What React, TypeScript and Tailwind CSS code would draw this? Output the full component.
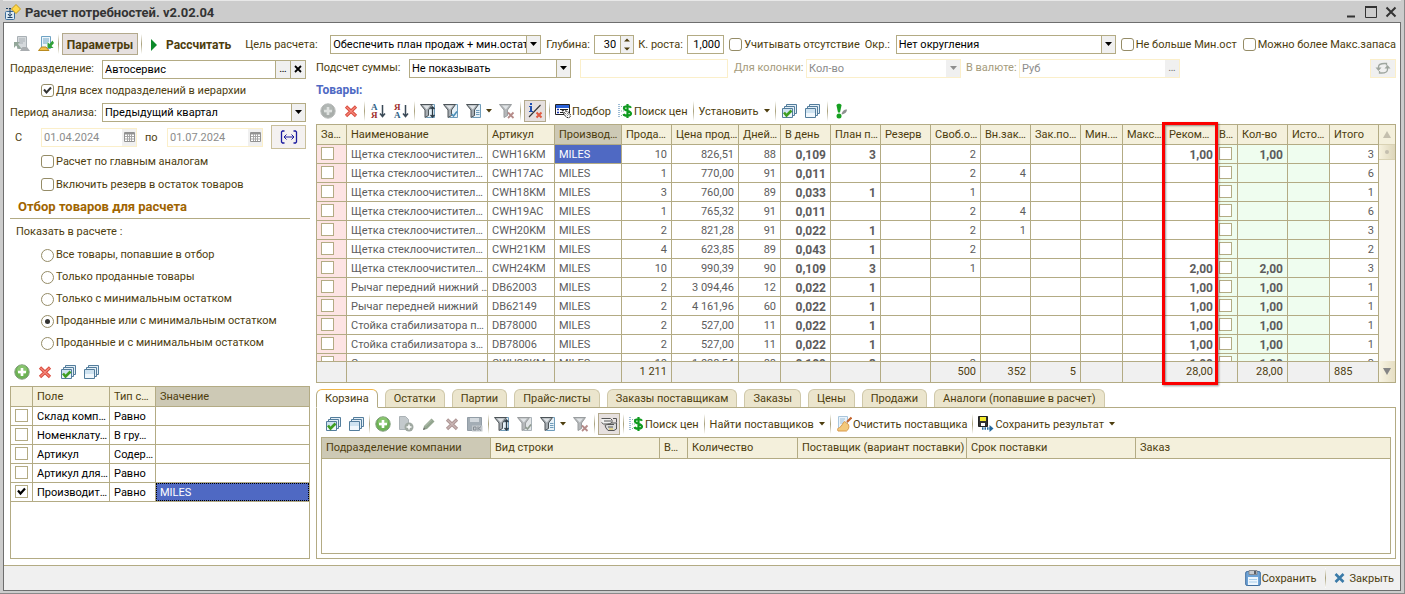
import type { ReactNode } from 'react';
import clsx from 'clsx';

/* ---------- icons ---------- */

function Icon({ children, w = 16 }: { children: ReactNode; w?: number }) {
  return (
    <svg width={w} height={16} viewBox={`0 0 ${w} 16`} className="shrink-0" aria-hidden="true">
      {children}
    </svg>
  );
}

const AppIcon = () => (
  <Icon>
    <rect x="0.5" y="7.500" width="9" height="8" rx="1" fill="#dbeaf5" stroke="#3c6e9c" />
    <path d="M5 5v7M3 10l2 2.500L7 10M2.500 13.500h5" stroke="#1c3f63" fill="none" />
    <path d="M1 4.500h6" stroke="#1c3f63" strokeDasharray="2 1" />
    <path d="M11 .5l4.500 4.500L11 9.500 6.500 5z" fill="#ffd84a" stroke="#c79a17" />
  </Icon>
);

const DocArrowIcon = ({ muted }: { muted?: boolean }) => (
  <Icon>
    <path d="M3.500.5h9v12h-9z" fill={muted ? '#d5d9dc' : '#eef6fb'} stroke={muted ? '#a9b0b5' : '#6fa3c4'} />
    <path d="M5 3h6M5 5h6M5 7h4" stroke={muted ? '#a9b0b5' : '#6fa3c4'} />
    {muted ? (
      <>
        <path d="M0 6h6L4 8l3 4-2 1-3-3.500L0 12z" fill="#93a79a" />
        <path d="M6 15l2.500-4h4.500l3 4z" fill="#a9adb0" />
      </>
    ) : (
      <>
        <path d="M.5 14.500l3-3.500h4.500l3 3.500z" fill="#f2c14b" stroke="#b98a1f" />
        <path d="M14.500 4.500L11.500 8 9.500 6v6h6l-2-2L16 7z" fill="#2fa038" />
      </>
    )}
  </Icon>
);

const PlusIcon = ({ muted }: { muted?: boolean }) => (
  <Icon>
    <circle cx="8" cy="8" r="7.200" fill={muted ? '#a9aeab' : '#6db254'} stroke={muted ? '#b9bcba' : '#7f9c7a'} />
    <circle cx="8" cy="6" r="5" fill={muted ? '#b8bcba' : '#9ad07f'} opacity="0.6" />
    <path d="M8 4v8M4 8h8" stroke={muted ? '#dfe2e0' : '#fff'} strokeWidth="2.600" />
  </Icon>
);

const CrossIcon = ({ muted }: { muted?: boolean }) => (
  <Icon>
    <path d="M3 3.500l10 9.500M13 3.500L3 13" stroke={muted ? '#ad9594' : '#d94a3c'} strokeWidth="3.200" />
    <path d="M3.500 4l9 8.500M12.500 4l-9 8.500" stroke={muted ? '#c9b5b4' : '#f58a7c'} strokeWidth="1.200" />
  </Icon>
);

const SheetsIcon = ({ checked }: { checked?: boolean }) => (
  <Icon>
    <path d="M5.500 1.500h10v9h-10z" fill="#e3eef6" stroke="#537d9c" />
    <path d="M3.500 3.500h10v9h-10z" fill="#e3eef6" stroke="#537d9c" />
    <path d="M1.500 5.500h10v9h-10z" fill="#f0f7fc" stroke="#537d9c" />
    <path d="M2 6h9v4H2z" fill="#cfe3f1" />
    {checked && <path d="M3 9.500l2.500 3L10.500 7.500" stroke="#3f9e22" strokeWidth="2.600" fill="none" />}
  </Icon>
);

const SortIcon = ({ up }: { up?: boolean }) => (
  <Icon>
    <text x="1" y="7" fontSize="9" fontWeight="700" fontFamily="Liberation Serif, serif" fill={up ? '#a02c2c' : '#2d5f86'}>
      {up ? 'Я' : 'А'}
    </text>
    <text x="1" y="15" fontSize="9" fontWeight="700" fontFamily="Liberation Serif, serif" fill={up ? '#2d5f86' : '#a02c2c'}>
      {up ? 'А' : 'Я'}
    </text>
    <path d="M12.500 2v11M10 10.500l2.500 3 2.500-3" stroke="#3b4a57" strokeWidth="1.500" fill="none" />
  </Icon>
);

type FilterKind = 'sort' | 'check' | 'list' | 'off';

const FilterIcon = ({ kind, muted }: { kind: FilterKind; muted?: boolean }) => (
  <Icon>
    {kind !== 'off' && <path d="M6.500 1.500h8v13h-8z" fill={muted ? '#e2e5e7' : '#e6f1f8'} stroke={muted ? '#aab3b9' : '#6f9cba'} />}
    <path d="M.5 1.500h12L8.500 7v5.500L5 14.500V7z" fill={muted || kind === 'off' ? '#b4b7b9' : '#a7adb2'} stroke={muted || kind === 'off' ? '#999d9f' : '#4c5357'} />
    <path d="M3 2.500h7L6.800 6.500z" fill="#dfe3e6" />
    {kind === 'sort' && <path d="M12.500 4v10M10.500 6l2-2 2 2M10.500 12l2 2 2-2" stroke="#2b3a45" strokeWidth="1.300" fill="none" />}
    {kind === 'check' && <path d="M8.500 11l2 2 3.500-4.500" stroke={muted ? '#8f9a8f' : '#4c8fb8'} strokeWidth="1.600" fill="none" />}
    {kind === 'list' && <path d="M10 7.500h3.500M10 9.500h3.500M10 11.500h3.500" stroke="#6f9cba" />}
    {kind === 'off' && <path d="M9 9.500l5.500 5.500M14.500 9.500L9 15" stroke="#b58b89" strokeWidth="1.800" />}
  </Icon>
);

const InfoIcon = () => (
  <Icon>
    <path d="M3 0h2v2H3zM2 3h3v5h1v1H2V8h1V4H2z" fill="#1f4fb0" />
    <path d="M13.500 2L2 14" stroke="#333" strokeWidth="1.100" />
    <path d="M9.500 9.500l5 5M14.500 9.500l-5 5" stroke="#e05a40" strokeWidth="2" />
  </Icon>
);

const PickIcon = () => (
  <Icon>
    <path d="M.5 1.500h14v10H.5z" fill="#fff" stroke="#222" />
    <path d="M1 2h13v3H1z" fill="#2a61d8" />
    <path d="M2 6.500h2M2 9.500h2" stroke="#1733b5" strokeWidth="1.500" />
    <path d="M5 6.500h8M5 9.500h4" stroke="#222" />
    <path d="M7 7l6 1.500 3 4-2 2.500-3-1-2-3z" fill="#fff" stroke="#222" strokeDasharray="2 1" />
    <path d="M9 9l4 4M11 8.500l3.500 4" stroke="#222" strokeDasharray="1 1" />
  </Icon>
);

const DollarIcon = () => (
  <Icon w={15}>
    <path d="M1 1v14" stroke="#3b77a8" strokeDasharray="1 1" />
    <path d="M3 3.500h3M3 8h3M3 12.500h3" stroke="#8aa" strokeDasharray="1 1" />
    <path d="M13 4.800C12 2.800 6 2.500 6 5.200S13 7.800 13 10.500 6.500 13.500 5.500 11M9.500 1v14" stroke="#0f9a1e" strokeWidth="2.200" fill="none" />
  </Icon>
);

const ExclaimIcon = () => (
  <Icon>
    <path d="M6.500 11c1-4 4-5 5.500-4.500 0 2.500-2 4.500-5 5z" fill="#8d9190" />
    <path d="M1.500 2.500c0-2.500 5-2.500 5 0L5 9.500H3z" fill="#16a021" />
    <circle cx="4" cy="13" r="2.500" fill="#16a021" />
  </Icon>
);

const DocPlusIcon = () => (
  <Icon>
    <path d="M1.500.5h6l3 3v10h-9z" fill="#c3c9cc" stroke="#abb2b6" />
    <circle cx="11" cy="11" r="4.500" fill="#9fa8a1" />
    <path d="M11 8.500v5M8.500 11h5" stroke="#fff" strokeWidth="1.500" />
  </Icon>
);

const PencilIcon = () => (
  <Icon>
    <path d="M2 14l1-4 7.500-7.500 3 3L6 13z" fill="#93a58f" />
    <path d="M4 10.500L11 3.500" stroke="#b5c2b1" />
    <path d="M2 14l1-2.500L4.500 13z" fill="#6b6b6b" />
  </Icon>
);

const SaveOkIcon = () => (
  <Icon>
    <path d="M.5 1.500h14v13h-14z" fill="#a3adb5" stroke="#929da6" />
    <path d="M3 2h9v4H3z" fill="#d3d9de" />
    <path d="M5 9.500h10.500v6H5z" fill="#c3c8cc" />
    <path d="M6.500 11h2.500v3H6.500zM11 10.500v4M14 10.500l-2.500 2 2.500 2" stroke="#858d94" fill="none" />
  </Icon>
);

const LinkIcon = () => (
  <Icon w={18}>
    <path d="M1.500 2.500h9l1.500 1.500v2.500L10 8H3.500L1.500 6.500M4 5h7" fill="#f0f0f0" stroke="#555" />
    <path d="M5 9.500c2-1.500 4-1 6-2.500h5.500v6L14 14.500H8L6 12z" fill="#dadada" stroke="#555" />
    <path d="M8 11h5M13 2.500h3.500v4M8 8.500h6" stroke="#555" fill="none" />
    <path d="M9 13h4" stroke="#e3c83d" />
  </Icon>
);

const BrushIcon = () => (
  <Icon>
    <path d="M2.500.5h9v13h-9z" fill="#eaf3fb" stroke="#a9c6dc" />
    <path d="M4 3h5M4 5h4M4 7h3" stroke="#9fbfd6" />
    <path d="M15.500 1.500L11 6" stroke="#c3642d" strokeWidth="2.200" />
    <path d="M8.500 5.500l4 3c1 3 0 5-2 6.500H2c-1-2 0-3 1.500-3.500C6 10.500 6.500 7 8.500 5.500z" fill="#f3c97c" stroke="#d99a4a" />
  </Icon>
);

const SaveResultIcon = () => (
  <Icon>
    <path d="M.5.5h9v10h-9z" fill="#333" stroke="#222" />
    <path d="M2 1h6v4H2z" fill="#f3ea2e" />
    <path d="M3 7h4v3H3z" fill="#fff" />
    <path d="M4 12.500h8" stroke="#24699e" strokeWidth="2.500" strokeDasharray="1.500 1" />
    <path d="M11.500 9l4 3.500-4 3.500z" fill="#24699e" />
  </Icon>
);

const DisketteIcon = () => (
  <Icon>
    <rect x="0.700" y="1.500" width="14.600" height="14" rx="1.500" fill="#6ea3d6" stroke="#3f6d9e" />
    <path d="M4 .5h8v4H4z" fill="#c9ccd0" stroke="#85898f" />
    <path d="M9 1h2v3H9z" fill="#5b5f66" />
    <path d="M3 7h10v8H3z" fill="#eef6fd" />
    <path d="M4 9.500h8M4 12h8" stroke="#a8cdea" />
  </Icon>
);

const CloseIcon = () => (
  <Icon w={11}>
    <path d="M1.500 4l8 8M9.500 4l-8 8" stroke="#3b7ba8" strokeWidth="2.600" />
  </Icon>
);

const RefreshIcon = () => (
  <Icon>
    <path d="M3.500 8.500V7C3.500 5 6 3.500 9.500 3.500h2v2M12.500 8v1.500c0 2-2.500 3.500-6 3.500h-2v-2" stroke="#9fa69f" strokeWidth="1.300" fill="none" />
    <path d="M.5 7.500h6l-3 3.500zM9.500 8.500h6l-3-3.500z" fill="#9fa69f" />
  </Icon>
);

const PeriodIcon = () => (
  <Icon w={18}>
    <path d="M4.500 2H2.500L1.500 3v10l1 1h2M13.500 2h2l1 1v10l-1 1h-2" stroke="#1b1b9e" strokeWidth="1.300" fill="none" />
    <path d="M4 8h10M6.500 5.500L4 8l2.500 2.500M11.500 5.500L14 8l-2.500 2.500" stroke="#1b1b9e" fill="none" />
  </Icon>
);

const CalendarIcon = () => (
  <svg width="11" height="10" viewBox="0 0 11 10" aria-hidden="true">
    <path d="M.5.5h10v9H.5z" fill="#fff" stroke="#929292" />
    <path d="M1 1.500h9" stroke="#929292" strokeWidth="2" />
    <path d="M1 4.500h9M1 7h9M3.500 2v7M5.500 2v7M7.500 2v7" stroke="#a5a5a5" />
  </svg>
);

const Caret = ({ muted }: { muted?: boolean }) => (
  <svg width="7" height="4" viewBox="0 0 7 4" className="shrink-0" aria-hidden="true">
    <path d="M0 0h7L3.500 4z" fill={muted ? '#8e8e8e' : '#000'} />
  </svg>
);

const MenuCaret = () => (
  <svg width="6" height="4" viewBox="0 0 6 4" className="ml-1 shrink-0" aria-hidden="true">
    <path d="M0 0h6L3 3.500z" fill="#4d3d0e" />
  </svg>
);

/* ---------- controls ---------- */

// tight pulls the neighbours closer inside an evenly spaced toolbar
const Sep = ({ tight }: { tight?: boolean }) => (
  <span className={clsx('h-5 w-px shrink-0 bg-gradient-to-b from-white via-[#a9a17c] to-white', tight && '-mx-[2px]')} />
);

function IconButton({ label, children, pressed }: { label: string; children: ReactNode; pressed?: boolean }) {
  return (
    <button
      type="button"
      aria-label={label}
      title={label}
      className={clsx(
        'flex shrink-0 items-center justify-center',
        pressed ? '-mx-[2px] size-[22px] border border-[#b3a98c] bg-[#e6e0df]' : 'h-5',
      )}
    >
      {children}
    </button>
  );
}

function TextButton({ icon, children, menu }: { icon?: ReactNode; children: ReactNode; menu?: boolean }) {
  return (
    <button type="button" className="flex shrink-0 items-center gap-px text-[#4d3d0e]">
      {icon}
      <span className="pt-[2px]">{children}</span>
      {menu && <MenuCaret />}
    </button>
  );
}

function Select({ id, value, className, disabled }: { id: string; value: string; className: string; disabled?: boolean }) {
  return (
    <span className={clsx('flex h-[19px] min-w-0 border', disabled ? 'border-[#fbefca]' : 'border-[#b3ab84]', className)}>
      <select
        id={id}
        disabled={disabled}
        className={clsx('min-w-0 flex-1 appearance-none overflow-hidden bg-white pt-px pl-[2px]', disabled ? 'text-[#8c8c8c] opacity-100' : 'text-black')}
      >
        <option>{value}</option>
      </select>
      <span className={clsx('flex w-[14px] shrink-0 items-center justify-center bg-[#f0f0f0]', !disabled && 'border-l border-[#b3ab84]')}>
        <Caret muted={disabled} />
      </span>
    </span>
  );
}

function Check({ label, checked }: { label: string; checked?: boolean }) {
  return (
    <label className="flex shrink-0 items-center gap-[2px]">
      <span className="grid place-items-center">
        <input
          type="checkbox"
          defaultChecked={checked}
          className="col-start-1 row-start-1 size-[13px] appearance-none rounded-[3px] border border-[#958c67] bg-white"
        />
        {checked && (
          <svg width="9" height="9" viewBox="0 0 9 9" className="pointer-events-none col-start-1 row-start-1">
            <path d="M1 3.500l2.500 3L8 1.500" stroke="#333" strokeWidth="2" fill="none" />
          </svg>
        )}
      </span>
      <span className="pt-px">{label}</span>
    </label>
  );
}

function CellCheck({ label, checked }: { label: string; checked?: boolean }) {
  return (
    <span className="mb-px grid w-[13px] place-items-center">
      <input
        type="checkbox"
        aria-label={label}
        defaultChecked={checked}
        className="col-start-1 row-start-1 size-[13px] appearance-none border border-[#b3ab84] bg-white"
      />
      {checked && (
        <svg width="9" height="9" viewBox="0 0 9 9" className="pointer-events-none col-start-1 row-start-1">
          <path d="M1 3.500l2.500 3L8 1.500" stroke="#000" strokeWidth="2.200" fill="none" />
        </svg>
      )}
    </span>
  );
}

function DateField({ id, value }: { id: string; value: string }) {
  return (
    <span className="flex h-[19px] w-[96px] shrink-0 border border-[#fbefca]">
      <input id={id} disabled defaultValue={value} className="w-0 flex-1 pt-px pl-[2px] text-[#8c8c8c]" />
      <span className="flex w-[14px] items-center justify-center bg-[#f0f0f0]">
        <CalendarIcon />
      </span>
    </span>
  );
}

/* ---------- data ---------- */

type Align = 'left' | 'right';
type Column = { key: string; title: string; width?: number; align?: Align; bold?: boolean; check?: boolean; bg?: string };

const columns: Column[] = [
  { key: 'mark', title: 'За…', width: 30, check: true, bg: 'bg-[#fde4e4]' },
  { key: 'name', title: 'Наименование' },
  { key: 'sku', title: 'Артикул', width: 67 },
  { key: 'maker', title: 'Производ…', width: 67 },
  { key: 'sold', title: 'Прода…', width: 50, align: 'right' },
  { key: 'price', title: 'Цена прод…', width: 67, align: 'right' },
  { key: 'days', title: 'Дней…', width: 42, align: 'right' },
  { key: 'perDay', title: 'В день', width: 50, align: 'right', bold: true },
  { key: 'plan', title: 'План п…', width: 50, align: 'right', bold: true },
  { key: 'reserve', title: 'Резерв', width: 50, align: 'right' },
  { key: 'free', title: 'Своб.о…', width: 50, align: 'right' },
  { key: 'inner', title: 'Вн.зак…', width: 50, align: 'right' },
  { key: 'ordered', title: 'Зак.по…', width: 50, align: 'right' },
  { key: 'min', title: 'Мин.…', width: 42, align: 'right' },
  { key: 'max', title: 'Макс…', width: 42, align: 'right' },
  { key: 'advice', title: 'Реком…', width: 53, align: 'right', bold: true },
  { key: 'sel', title: 'В…', width: 20, check: true, bg: 'bg-[#effdef]' },
  { key: 'qty', title: 'Кол-во', width: 50, align: 'right', bold: true, bg: 'bg-[#effdef]' },
  { key: 'source', title: 'Исто…', width: 42, bg: 'bg-[#effdef]' },
  { key: 'total', title: 'Итого', width: 49, align: 'right' },
];

type Row = Record<string, string>;

const item = (name: string, sku: string, sold: string, price: string, days: string, perDay: string, plan: string, free: string, inner: string, advice: string, total: string): Row => ({
  name, sku, maker: 'MILES', sold, price, days, perDay, plan, free, inner, advice, qty: advice, total,
});

const rows: Row[] = [
  item('Щетка стеклоочистител…', 'CWH16KM', '10', '826,51', '88', '0,109', '3', '2', '', '1,00', '3'),
  item('Щетка стеклоочистител…', 'CWH17AC', '1', '770,00', '91', '0,011', '', '2', '4', '', '6'),
  item('Щетка стеклоочистител…', 'CWH18KM', '3', '760,00', '89', '0,033', '1', '1', '', '', '1'),
  item('Щетка стеклоочистител…', 'CWH19AC', '1', '765,32', '91', '0,011', '', '2', '4', '', '6'),
  item('Щетка стеклоочистител…', 'CWH20KM', '2', '821,28', '91', '0,022', '1', '2', '1', '', '3'),
  item('Щетка стеклоочистител…', 'CWH21KM', '4', '623,85', '89', '0,043', '1', '2', '', '', '2'),
  item('Щетка стеклоочистител…', 'CWH24KM', '10', '990,39', '90', '0,109', '3', '1', '', '2,00', '3'),
  item('Рычаг передний нижний …', 'DB62003', '2', '3 094,46', '12', '0,022', '1', '', '', '1,00', '1'),
  item('Рычаг передней нижний', 'DB62149', '2', '4 161,96', '60', '0,022', '1', '', '', '1,00', '1'),
  item('Стойка стабилизатора п…', 'DB78000', '2', '527,00', '11', '0,022', '1', '', '', '1,00', '1'),
  item('Стойка стабилизатора з…', 'DB78006', '2', '527,00', '11', '0,022', '1', '', '', '1,00', '1'),
  item('Стартер', 'CWH22KM', '10', '1 028,54', '88', '0,109', '3', '2', '', '1,00', '3'),
];

const totals: Row = { sold: '1 211', free: '500', inner: '352', ordered: '5', advice: '28,00', qty: '28,00', total: '885' };

const filters = [
  { field: 'Склад комп…', op: 'Равно', value: '' },
  { field: 'Номенклату…', op: 'В гру…', value: '' },
  { field: 'Артикул', op: 'Содер…', value: '' },
  { field: 'Артикул для…', op: 'Равно', value: '' },
  { field: 'Производит…', op: 'Равно', value: 'MILES' },
];

const modes = [
  'Все товары, попавшие в отбор',
  'Только проданные товары',
  'Только с минимальным остатком',
  'Проданные или с минимальным остатком',
  'Проданные и с минимальным остатком',
];

const tabs = ['Корзина', 'Остатки', 'Партии', 'Прайс-листы', 'Заказы поставщикам', 'Заказы', 'Цены', 'Продажи', 'Аналоги (попавшие в расчет)'];

const basketColumns = [
  { title: 'Подразделение компании', width: 169 },
  { title: 'Вид строки', width: 169 },
  { title: 'В…', width: 28 },
  { title: 'Количество', width: 110 },
  { title: 'Поставщик (вариант поставки)', width: 169 },
  { title: 'Срок поставки', width: 169 },
  { title: 'Заказ' },
];

/* ---------- sections ---------- */

function TitleBar() {
  return (
    <header className="flex h-[22px] items-center border-t border-[#e8e8e8] pl-[2px]">
      <AppIcon />
      <h1 className="ml-1 flex-1 pt-[2px] text-[13px] font-bold text-[#333]">Расчет потребностей. v2.02.04</h1>
      <button type="button" aria-label="Свернуть" className="px-1">
        <svg width="12" height="12" viewBox="0 0 12 12"><path d="M2 10.500h8" stroke="#333" strokeWidth="2" /></svg>
      </button>
      <button type="button" aria-label="Развернуть" className="px-1">
        <svg width="12" height="12" viewBox="0 0 12 12"><path d="M.5 1h11v10.500H.5z" stroke="#333" fill="none" /><path d="M0 1h12" stroke="#333" strokeWidth="2" /></svg>
      </button>
      <button type="button" aria-label="Закрыть окно" className="px-1">
        <svg width="12" height="12" viewBox="0 0 12 12"><path d="M1.500 1.500l9 9M10.500 1.500l-9 9" stroke="#333" strokeWidth="2" /></svg>
      </button>
    </header>
  );
}

function MainToolbar() {
  return (
    <div className="mb-[3px] flex h-[22px] items-center pl-1">
      <IconButton label="Загрузить"><DocArrowIcon muted /></IconButton>
      <span className="w-2" />
      <IconButton label="Выгрузить"><DocArrowIcon /></IconButton>
      <span className="w-1" />
      <Sep />
      <button type="button" className="mx-[3px] h-[22px] w-[76px] shrink-0 border border-[#b3a98c] bg-[#e6e0df] pt-px text-[12px] font-bold text-[#4d3d0e]">
        Параметры
      </button>
      <Sep />
      <button type="button" className="ml-[9px] flex shrink-0 items-center gap-[9px] pt-px text-[12px] font-bold text-[#4d3d0e]">
        <svg width="6" height="12" viewBox="0 0 6 12"><path d="M0 0l6 6-6 6z" fill="#0c8a2a" /></svg>
        Рассчитать
      </button>
      <label htmlFor="goal" className="ml-[14px] w-[85px] shrink-0 pt-px">Цель расчета:</label>
      <Select id="goal" value="Обеспечить план продаж + мин.остат" className="w-[211px] shrink-0" />
      <label htmlFor="depth" className="ml-[5px] w-[48px] shrink-0 pt-px">Глубина:</label>
      <span className="flex h-[19px] w-[40px] shrink-0 border border-[#b3ab84]">
        <input id="depth" defaultValue="30" className="w-0 flex-1 pt-px pr-1 text-right text-black" />
        <button type="button" aria-label="Изменить глубину" className="flex w-[13px] items-center justify-center border-l border-[#b3ab84] bg-[#f0f0f0]">
          <svg width="6" height="13" viewBox="0 0 6 13"><path d="M0 3.500h6L3 .5zM0 9.500h6l-3 3z" fill="#4d3d0e" /></svg>
        </button>
      </span>
      <label htmlFor="growth" className="ml-[4px] w-[49px] shrink-0 pt-px">К. роста:</label>
      <input id="growth" defaultValue="1,000" className="mr-[5px] h-[19px] w-[37px] shrink-0 border border-[#b3ab84] pt-px pr-[3px] text-right text-black" />
      <Check label="Учитывать отсутствие" />
      <label htmlFor="round" className="ml-[5px] w-[31px] shrink-0 pt-px">Окр.:</label>
      <Select id="round" value="Нет округления" className="mr-[5px] flex-1" />
      <Check label="Не больше Мин.ост" />
      <span className="w-[6px]" />
      <Check label="Можно более Макс.запаса" />
    </div>
  );
}

function FilterTable() {
  return (
    <div className="min-h-[172px] flex-1 border border-[#b3ab84]">
      <table className="w-full table-fixed border-separate border-spacing-0 text-left text-black">
        <colgroup>
          <col className="w-[22px]" />
          <col className="w-[77px]" />
          <col className="w-[46px]" />
          <col />
        </colgroup>
        <thead>
          <tr className="text-[#4d3d0e]">
            {['', 'Поле', 'Тип с…', 'Значение'].map((t, i) => (
              <th key={i} className={clsx('h-[20px] truncate border-b border-[#b3ab84] pl-1 font-normal', i === 3 ? 'bg-[#cdc9b5]' : 'border-r bg-[#f4f0dc]')}>
                {t}
              </th>
            ))}
          </tr>
        </thead>
        <tbody>
          {filters.map((f) => (
            <tr key={f.field}>
              <td className="h-[19px] border-r border-b border-[#b3ab84] pl-1">
                <CellCheck label={f.field} checked={!!f.value} />
              </td>
              <td className="truncate border-r border-b border-[#b3ab84] pt-[2px] pl-1">{f.field}</td>
              <td className="truncate border-r border-b border-[#b3ab84] pt-[2px] pl-1">{f.op}</td>
              <td className={clsx('border-b border-[#b3ab84]', f.value ? 'p-0' : 'pl-1')}>
                {f.value && (
                  <div className="h-[18px] border border-dotted border-black bg-[#4f69c3] pt-px pl-[3px] leading-4 text-white">{f.value}</div>
                )}
              </td>
            </tr>
          ))}
        </tbody>
      </table>
    </div>
  );
}

function Sidebar() {
  return (
    <aside className="flex w-[300px] shrink-0 flex-col">
      <div className="flex h-[22px] items-center">
        <label htmlFor="dept" className="w-[92px]">Подразделение:</label>
        <span className="flex h-[19px] w-[204px] border border-[#b3ab84]">
          <input id="dept" defaultValue="Автосервис" className="w-0 flex-1 pt-px pl-[2px] text-black" />
          <button type="button" aria-label="Выбрать" className="flex w-[15px] items-center justify-center border-l border-[#b3ab84] bg-[#f0f0f0] text-black">…</button>
          <button type="button" aria-label="Очистить" className="flex w-[15px] items-center justify-center border-l border-[#b3ab84] bg-[#f0f0f0]">
            <svg width="8" height="8" viewBox="0 0 8 8"><path d="M1 1l6 6M7 1L1 7" stroke="#000" strokeWidth="1.800" /></svg>
          </button>
        </span>
      </div>
      <div className="flex h-[20px] items-center pl-[31px]">
        <Check label="Для всех подразделений в иерархии" checked />
      </div>
      <div className="flex h-[24px] items-center">
        <label htmlFor="period" className="w-[92px] pt-px">Период анализа:</label>
        <Select id="period" value="Предыдущий квартал" className="w-[204px]" />
      </div>
      <div className="flex h-[26px] items-center">
        <label htmlFor="from" className="ml-[5px] w-[26px] pt-px">С</label>
        <DateField id="from" value="01.04.2024" />
        <label htmlFor="to" className="ml-[8px] w-[22px] pt-px">по</label>
        <DateField id="to" value="01.07.2024" />
        <button type="button" aria-label="Период" className="ml-2 flex h-[24px] w-[35px] items-center justify-center border border-[#c9bf9b] bg-[#f4f1f0]">
          <PeriodIcon />
        </button>
      </div>
      <div className="flex h-[23px] items-center pl-[31px]">
        <Check label="Расчет по главным аналогам" />
      </div>
      <div className="flex h-[23px] items-center pl-[31px]">
        <Check label="Включить резерв в остаток товаров" />
      </div>
      <h2 className="flex h-[23px] items-center border-b border-[#b3ab84] pl-2 text-[13px] font-bold text-[#a06400]">Отбор товаров для расчета</h2>
      <fieldset>
        <legend className="flex h-[25px] items-center pt-px pl-[6px]">Показать в расчете :</legend>
        {modes.map((mode, i) => (
          <label key={mode} className="flex h-[22px] items-center gap-[2px] pl-[31px]">
            <span className="grid place-items-center">
              <input
                type="radio"
                name="mode"
                defaultChecked={i === 3}
                className="peer col-start-1 row-start-1 size-[13px] appearance-none rounded-full border border-[#958c67] bg-white"
              />
              <span className="pointer-events-none col-start-1 row-start-1 hidden size-[5px] rounded-full bg-[#333] peer-checked:block" />
            </span>
            {mode}
          </label>
        ))}
      </fieldset>
      <div className="flex h-[32px] items-center gap-[7px] pt-1 pl-1">
        <IconButton label="Добавить"><PlusIcon /></IconButton>
        <IconButton label="Удалить"><CrossIcon /></IconButton>
        <IconButton label="Отметить все"><SheetsIcon checked /></IconButton>
        <IconButton label="Снять отметки"><SheetsIcon /></IconButton>
      </div>
      <FilterTable />
    </aside>
  );
}

function SumRow() {
  return (
    <div className="flex h-[20px] items-center text-[#4d3d0e]">
      <label htmlFor="sum" className="w-[93px] shrink-0">Подсчет суммы:</label>
      <Select id="sum" value="Не показывать" className="w-[162px] shrink-0" />
      <input disabled aria-label="Сумма" className="mr-[6px] ml-[9px] h-[19px] w-[148px] shrink-0 border border-[#fbefca]" />
      <label htmlFor="col" className="w-[72px] shrink-0 text-[#a59b7c]">Для колонки:</label>
      <Select id="col" value="Кол-во" disabled className="w-[155px] shrink-0" />
      <label htmlFor="cur" className="ml-[5px] w-[53px] shrink-0 text-[#a59b7c]">В валюте:</label>
      <span className="flex h-[19px] w-[161px] shrink-0 border border-[#fbefca]">
        <input id="cur" disabled defaultValue="Руб" className="w-0 flex-1 pt-px pl-[2px] text-[#8c8c8c]" />
        <button type="button" disabled aria-label="Выбрать валюту" className="w-[14px] bg-[#f0f0f0] text-[#777]">…</button>
      </span>
      <button type="button" disabled aria-label="Обновить" className="ml-auto flex h-[19px] w-[26px] items-center justify-center border border-[#fbefca] bg-[#f0f0f0]">
        <RefreshIcon />
      </button>
    </div>
  );
}

function GoodsToolbar() {
  return (
    <div className="mb-[2px] flex h-[22px] items-center gap-[7px] pl-1">
      <IconButton label="Добавить"><PlusIcon muted /></IconButton>
      <IconButton label="Удалить"><CrossIcon /></IconButton>
      <Sep tight />
      <IconButton label="По возрастанию"><SortIcon /></IconButton>
      <IconButton label="По убыванию"><SortIcon up /></IconButton>
      <Sep tight />
      <IconButton label="Отбор и сортировка"><FilterIcon kind="sort" /></IconButton>
      <IconButton label="Отбор по значению"><FilterIcon kind="check" /></IconButton>
      <IconButton label="История отборов"><FilterIcon kind="list" /><MenuCaret /></IconButton>
      <IconButton label="Отключить отбор"><FilterIcon kind="off" /></IconButton>
      <Sep tight />
      <IconButton label="Информация" pressed><InfoIcon /></IconButton>
      <Sep tight />
      <TextButton icon={<PickIcon />}>Подбор</TextButton>
      <TextButton icon={<DollarIcon />}>Поиск цен</TextButton>
      <Sep tight />
      <TextButton menu>Установить</TextButton>
      <Sep tight />
      <IconButton label="Отметить все"><SheetsIcon checked /></IconButton>
      <IconButton label="Снять отметки"><SheetsIcon /></IconButton>
      <Sep />
      <IconButton label="Проверить"><ExclaimIcon /></IconButton>
    </div>
  );
}

function GoodsTable() {
  return (
    <div className="relative flex h-[259px] shrink-0 border border-[#b3ab84]">
      <div className="min-w-0 flex-1 overflow-hidden">
        <table className="w-full table-fixed border-separate border-spacing-0 text-left">
          <colgroup>
            {columns.map((c) => (
              <col key={c.key} style={{ width: c.width }} />
            ))}
          </colgroup>
          <thead className="sticky top-0 z-10">
            <tr className="text-[#4d3d0e]">
              {columns.map((c) => (
                <th
                  key={c.key}
                  className={clsx(
                    'h-[20px] overflow-hidden border-r border-b border-[#b3ab84] font-normal whitespace-nowrap',
                    c.key === 'sel' ? 'pl-px' : 'pl-1',
                    c.key === 'maker' ? 'bg-[#cdc9b5]' : 'bg-[#f4f0dc]',
                  )}
                >
                  {c.title}
                </th>
              ))}
            </tr>
          </thead>
          <tbody className="text-[#5c5c5c]">
            {rows.map((row, i) => (
              <tr key={row.sku}>
                {columns.map((c) => (
                  <td
                    key={c.key}
                    className={clsx(
                      'h-[19px] overflow-hidden border-r border-b border-[#b3ab84] whitespace-nowrap',
                      c.align === 'right' ? 'pr-1 text-right' : c.key === 'sel' ? 'pl-px' : 'pl-1',
                      !c.check && 'pt-[2px]',
                      c.bold && 'text-[12px] leading-4 font-bold',
                      c.key === 'maker' && i === 0 ? 'bg-[#4f69c3] text-white' : c.bg,
                    )}
                  >
                    {c.check ? <CellCheck label={`${c.title} ${row.sku}`} /> : row[c.key]}
                  </td>
                ))}
              </tr>
            ))}
          </tbody>
          <tfoot className="sticky bottom-0 z-10">
            <tr className="text-[#4d3d0e]">
              {columns.map((c) => (
                <td
                  key={c.key}
                  className={clsx(
                    'h-[21px] border-t border-r border-[#b3ab84] bg-[#f0f0f0]',
                    c.align === 'right' && c.key !== 'total' ? 'pr-1 text-right' : 'pl-1',
                  )}
                >
                  {totals[c.key]}
                </td>
              ))}
            </tr>
          </tfoot>
        </table>
      </div>
      <div className="flex w-[16px] shrink-0 flex-col bg-[#f8f6ef] text-center">
        <span className="flex h-[20px] items-center justify-center border-b border-[#d9d2b4] bg-[#f4f0dc]">
          <svg width="8" height="7" viewBox="0 0 8 7"><path d="M4 0l4 7H0z" fill="#c4bfae" /></svg>
        </span>
        <span className="flex h-[15px] items-center justify-center border-b border-[#d9d2b4] bg-gradient-to-r from-[#f6f1dd] to-[#ddd6ba]">
          <svg width="4" height="4" viewBox="0 0 4 4"><circle cx="2" cy="2" r="2" fill="#c4bfae" /></svg>
        </span>
        <span className="mt-auto flex h-[21px] items-center justify-center bg-gradient-to-r from-[#f8f4e4] to-[#e6dfc4]">
          <svg width="8" height="7" viewBox="0 0 8 7"><path d="M0 0h8L4 7z" fill="#858585" /></svg>
        </span>
      </div>
      <div className="pointer-events-none absolute -top-[3px] right-[177px] -bottom-[3px] z-20 w-[56px] border-3 border-[#fb0000] shadow-[1px_1px_2px_rgba(0,0,0,0.4),inset_1px_1px_2px_rgba(0,0,0,0.4)]" />
    </div>
  );
}

function Basket() {
  return (
    <section className="mt-[6px] flex flex-1 flex-col">
      <div role="tablist" className="flex h-[18px] gap-[7px]">
        {tabs.map((tab, i) => (
          <button
            key={tab}
            type="button"
            role="tab"
            aria-selected={i === 0}
            className={clsx(
              'z-10 shrink-0 rounded-t-[6px] border px-[8px] pt-px leading-4 text-[#4d3d0e]',
              i === 0
                ? 'h-[19px] border-[#b3ab84] border-t-[#f0b64a] border-b-white bg-white'
                : 'h-[18px] border-b-0 border-[#cfc8a9] bg-[#ebe5cd]',
            )}
          >
            {tab}
          </button>
        ))}
      </div>
      <div className="flex flex-1 flex-col border border-[#b3ab84] px-1 pb-1">
        <div className="flex h-[29px] items-center gap-[7px] pt-[2px] pl-1">
          <IconButton label="Отметить все"><SheetsIcon checked /></IconButton>
          <IconButton label="Снять отметки"><SheetsIcon /></IconButton>
          <Sep tight />
          <IconButton label="Добавить"><PlusIcon /></IconButton>
          <IconButton label="Скопировать"><DocPlusIcon /></IconButton>
          <IconButton label="Изменить"><PencilIcon /></IconButton>
          <IconButton label="Удалить"><CrossIcon muted /></IconButton>
          <IconButton label="Завершить"><SaveOkIcon /></IconButton>
          <Sep tight />
          <IconButton label="Отбор и сортировка"><FilterIcon kind="sort" /></IconButton>
          <IconButton label="Отбор по значению"><FilterIcon kind="check" muted /></IconButton>
          <IconButton label="История отборов"><FilterIcon kind="list" /><MenuCaret /></IconButton>
          <IconButton label="Отключить отбор"><FilterIcon kind="off" /></IconButton>
          <Sep tight />
          <IconButton label="Связать" pressed><LinkIcon /></IconButton>
          <Sep tight />
          <TextButton icon={<DollarIcon />}>Поиск цен</TextButton>
          <Sep tight />
          <TextButton menu>Найти поставщиков</TextButton>
          <Sep tight />
          <TextButton icon={<BrushIcon />}>Очистить поставщика</TextButton>
          <Sep tight />
          <TextButton icon={<SaveResultIcon />} menu>Сохранить результат</TextButton>
        </div>
        <div className="min-h-[117px] flex-1 border border-[#b3ab84]">
          <table className="w-full table-fixed border-separate border-spacing-0 text-left text-[#4d3d0e]">
            <colgroup>
              {basketColumns.map((c) => (
                <col key={c.title} style={{ width: c.width }} />
              ))}
            </colgroup>
            <thead>
              <tr>
                {basketColumns.map((c, i) => (
                  <th
                    key={c.title}
                    className={clsx(
                      'h-[21px] overflow-hidden border-b border-[#b3ab84] pl-1 font-normal whitespace-nowrap',
                      i === 0 ? 'bg-[#cdc9b5]' : 'bg-[#f4f0dc]',
                      i < basketColumns.length - 1 && 'border-r',
                    )}
                  >
                    {c.title}
                  </th>
                ))}
              </tr>
            </thead>
          </table>
        </div>
      </div>
    </section>
  );
}

export default function App() {
  return (
    <div className="flex min-h-screen flex-col border-r border-b border-[#8a8a8a] bg-[#cccccc] px-[3px] pb-[2px] text-[11px] leading-[14px] text-[#4d3d0e] [font-family:Roboto,'Noto_Sans',sans-serif]">
      <TitleBar />
      <div className="flex flex-1 flex-col border border-[#6e6e6e] bg-white">
        <main className="flex flex-1 flex-col pt-[10px] pr-1 pb-[6px] pl-[6px]">
          <MainToolbar />
          <div className="flex flex-1 gap-[6px]">
            <Sidebar />
            <div className="flex min-w-0 flex-1 flex-col">
              <SumRow />
              <h2 className="flex h-[22px] items-center pt-[2px] text-[12px] font-bold text-[#4f69c3]">Товары:</h2>
              <GoodsToolbar />
              <GoodsTable />
              <Basket />
            </div>
          </div>
        </main>
        <footer className="flex h-[25px] items-center justify-end gap-[8px] border-t border-[#b3ab84] bg-[#f0f0f0] pr-[6px]">
          <TextButton icon={<DisketteIcon />}>Сохранить</TextButton>
          <Sep />
          <button type="button" className="flex items-center gap-[5px]">
            <CloseIcon />
            <span className="pt-[2px]">Закрыть</span>
          </button>
        </footer>
      </div>
    </div>
  );
}
